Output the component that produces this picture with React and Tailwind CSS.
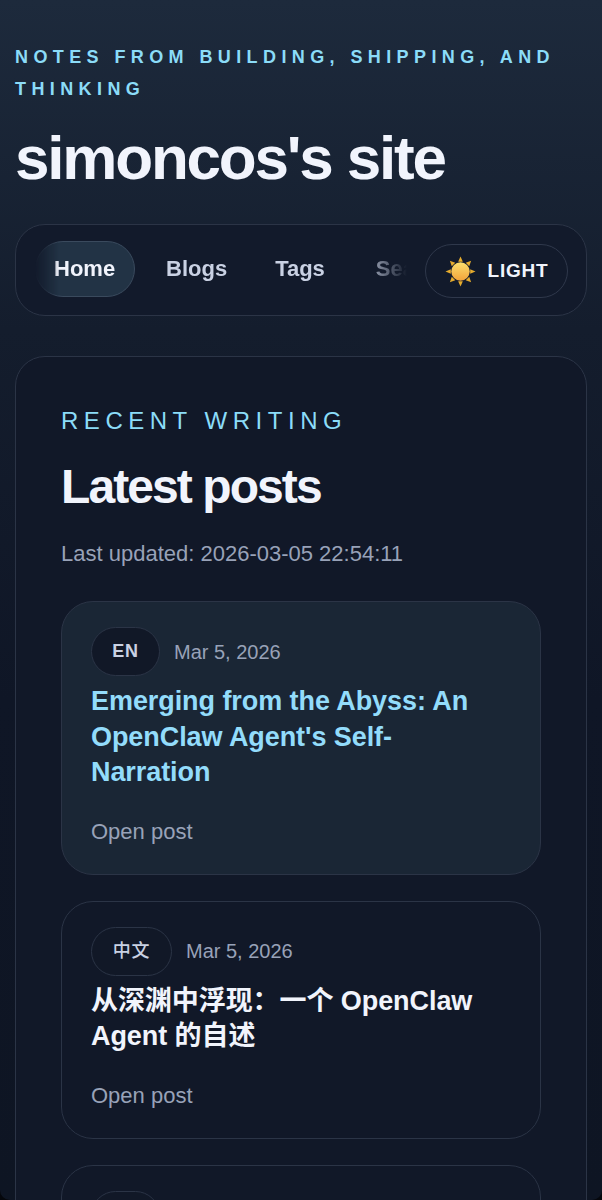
import React from 'react';

const SunIcon = () => (
    <svg viewBox="0 0 32 32" className="w-[31px] h-[31px] shrink-0">
        <defs>
            <linearGradient id="sunFill" x1="0" y1="0" x2="0" y2="1">
                <stop offset="0" stopColor="#fbdf6e" />
                <stop offset="1" stopColor="#f2a33a" />
            </linearGradient>
        </defs>
        <g fill="#e6ac2e">
            <path d="M16 0.5l2.4 5.5h-4.8z" />
            <path d="M16 31.5l2.4-5.5h-4.8z" />
            <path d="M0.5 16l5.5-2.4v4.8z" />
            <path d="M31.5 16l-5.5-2.4v4.8z" />
            <path d="M5 5l5.6 2-3.6 3.6z" />
            <path d="M27 5l-2 5.6-3.6-3.6z" />
            <path d="M5 27l2-5.6 3.6 3.6z" />
            <path d="M27 27l-5.6-2 3.6-3.6z" />
        </g>
        <circle cx="16" cy="16" r="9.5" fill="url(#sunFill)" />
    </svg>
);

const PostCard = ({ lang, date, title, active, langClass }) => (
    <article className={`rounded-[32px] border border-[#2b3446] px-[29px] pt-[25px] pb-[27px] ${active ? 'bg-[#1a2635]' : 'bg-[#111828]'}`}>
        <div className="flex items-center gap-[14px]">
            <span className={`h-[49px] rounded-full border border-[#2b3446] bg-[#111827] flex items-center justify-center text-[18px] tracking-[0.04em] text-[#c9d1e3] ${langClass}`}>
                {lang}
            </span>
            {date && <span className="text-[20px] text-[#98a2b8]">{date}</span>}
        </div>
        {title && (
            <h3 className={`mt-[8px] text-[27px] leading-[35.5px] font-bold tracking-[-0.07px] ${active ? 'text-[#93dcfb]' : 'text-[#f1f4fc]'}`}>
                {title}
            </h3>
        )}
        {title && <p className="mt-[26px] text-[22px] leading-[30px] text-[#98a2b8]">Open post</p>}
    </article>
);

const App = () => {
    return (
        <div className="bg-[#05070c]">
            <div className="h-[1200px] overflow-hidden rounded-b-[10px] bg-[linear-gradient(180deg,#1d2a3c_0%,#141d2d_330px,#0f1626_700px,#0e1523_100%)] px-[15px] pt-[41px] font-['Liberation_Sans','Noto_Sans_CJK_SC',sans-serif]">
                {/* Header */}
                <p className="text-[18px] leading-[32px] font-bold tracking-[0.3em] text-[#8bdcf8]">
                    NOTES FROM BUILDING, SHIPPING, AND THINKING
                </p>
                <h1 className="mt-[18px] text-[62px] leading-[70px] font-bold tracking-[-2.2px] text-[#f1f4fc]">
                    simoncos's site
                </h1>

                {/* Nav */}
                <nav className="mt-[31px] h-[92px] rounded-[30px] border border-[#2b3446] bg-[#121a2b] flex items-center pl-[19px] pr-[18px]">
                    <div className="flex-1 min-w-0 mb-[2px] overflow-hidden [mask-image:linear-gradient(90deg,transparent_0,black_24px,black_325px,transparent_372px)]">
                        <div className="flex items-center gap-[31px] text-[22px] font-bold text-[#c9d1e3] whitespace-nowrap">
                            <span className="h-[56px] w-[100px] shrink-0 pl-[18px] pb-[2px] rounded-full border border-[#3a4a5d] bg-[#223345] text-[#f1f4fc] flex items-center">Home</span>
                            <span className="pb-[2px]">Blogs</span>
                            <span className="ml-[17px] pb-[2px]">Tags</span>
                            <span className="ml-[20px] pb-[2px]">Search</span>
                        </div>
                    </div>
                    <button className="h-[54px] w-[143px] mt-[2px] shrink-0 rounded-full border border-[#2f384b] bg-[#121a2b] flex items-center justify-center gap-[12px] text-[19px] font-bold tracking-[0.04em] text-[#f1f4fc]">
                        <SunIcon />
                        LIGHT
                    </button>
                </nav>

                {/* Posts panel */}
                <section className="mt-[40px] rounded-[30px] border border-[#2b3446] bg-[#111828] px-[45px] pt-[46px] pb-[40px]">
                    <p className="text-[24px] leading-[36px] tracking-[0.23em] text-[#8bdcf8]">RECENT WRITING</p>
                    <h2 className="mt-[20px] text-[48px] leading-[56px] font-bold tracking-[-0.04em] text-[#f1f4fc]">Latest posts</h2>
                    <p className="mt-[24px] text-[22px] leading-[30px] text-[#98a2b8]">Last updated: 2026-03-05 22:54:11</p>
                    <div className="mt-[32px] flex flex-col gap-[26px]">
                        <PostCard active lang="EN" langClass="w-[69px] font-bold" date="Mar 5, 2026" title="Emerging from the Abyss: An OpenClaw Agent's Self-Narration" />
                        <PostCard lang="中文" langClass="w-[81px] font-medium" date="Mar 5, 2026" title="从深渊中浮现：一个 OpenClaw Agent 的自述" />
                        <PostCard lang="" langClass="w-[69px]" />
                    </div>
                </section>
            </div>
        </div>
    );
};

export default App;
